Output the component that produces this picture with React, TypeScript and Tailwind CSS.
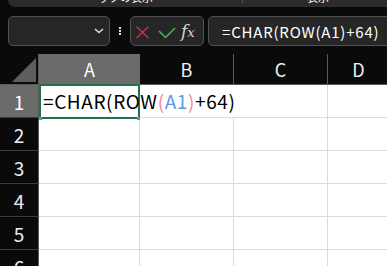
import React from "react";

const font = { fontFamily: '"Noto Sans CJK JP", "Noto Sans", sans-serif' };

function RowHead({ n, sel }: { n: number; sel?: boolean }) {
  return (
    <div
      className={`w-[39px] shrink-0 border-r border-b border-r-[#5a5a5a] border-b-[#3c3c3c] flex items-center justify-center text-[19px] leading-none ${
        sel ? "bg-[#6b6b6b] text-white" : "bg-[#0a0a0a] text-[#e8eef6]"
      }`}
    >
      {n}
    </div>
  );
}

function Row({ n }: { n: number }) {
  return (
    <div className="h-[33px] flex shrink-0">
      <RowHead n={n} />
      <div className="w-[101px] shrink-0 bg-white border-r border-b border-[#dadada]" />
      <div className="w-[94px] shrink-0 bg-white border-r border-b border-[#dadada]" />
      <div className="w-[94px] shrink-0 bg-white border-r border-b border-[#dadada]" />
      <div className="flex-1 bg-white border-b border-[#dadada]" />
    </div>
  );
}

export default function App() {
  return (
    <div className="w-[387px] h-[266px] overflow-hidden bg-[#0a0a0a] flex flex-col" style={font}>
      {/* ribbon remnant */}
      <div className="h-[7px] flex shrink-0">
        <div className="w-[8px]" />
        <div className="flex-1 bg-[#2b2b2b] rounded-bl-[7px] overflow-hidden flex items-start">
          <span className="ml-[90px] w-[144px] mt-[-8px] text-[11px] leading-[11px] text-white whitespace-nowrap">
            ックの表示
          </span>
          <div className="w-px h-[3px] bg-[#5a5a5a]" />
          <span className="ml-[64px] mt-[-8px] text-[11px] leading-[11px] text-white whitespace-nowrap">
            表示
          </span>
        </div>
      </div>

      {/* formula bar */}
      <div className="mt-[9px] h-[30px] flex shrink-0 pl-[8px]">
        <div className="w-[102px] rounded-[5px] border border-[#505050] bg-[#262626] flex items-center justify-end pr-[5px]">
          <svg width="10" height="6" viewBox="0 0 10 6">
            <path d="M1 1 L5 4.5 L9 1" stroke="#e0e0e0" strokeWidth="1.4" fill="none" />
          </svg>
        </div>
        <div className="ml-[8px] w-[3px] flex flex-col items-center justify-center gap-[1px]">
          <div className="w-[2px] h-[2px] bg-[#e0e0e0]" />
          <div className="w-[2px] h-[2px] bg-[#e0e0e0]" />
          <div className="w-[2px] h-[2px] bg-[#e0e0e0]" />
        </div>
        <div className="ml-[9px] w-[74px] rounded-[5px] border border-[#505050] bg-[#262626] flex items-center">
          <svg width="74" height="28" viewBox="0 0 74 28" className="-ml-px">
            <path d="M6.5 9.5 L18.5 21 M18.5 9.5 L6.5 21" stroke="#c8383c" strokeWidth="1.4" fill="none" />
            <path d="M29 14 L35.5 20.5 L45 11" stroke="#4fb453" strokeWidth="1.5" fill="none" />
          </svg>
          <span
            className="-ml-[20px] text-[17px] italic leading-none text-[#d8d8d8]"
            style={{ fontFamily: '"DejaVu Serif", serif' }}
          >
            <span className="-ml-[3px]">f</span>
            <span className="text-[13px]">x</span>
          </span>
        </div>
        <div className="ml-[4px] flex-1 mr-[-10px] rounded-[5px] border border-[#505050] bg-[#262626] flex items-center pl-[13px]">
          <span className="text-[15px] tracking-[0.8px] leading-none text-white whitespace-nowrap">=CHAR(ROW(A1)+64)</span>
        </div>
      </div>

      {/* grid */}
      <div className="mt-[8px] relative flex flex-col flex-1">
        <div className="h-[31px] flex shrink-0 border-b border-[#5c5c5c]">
          <div className="w-[39px] shrink-0 border-r border-[#5a5a5a] relative flex items-end justify-end pr-[2px] pb-[2px]">
            <svg width="24" height="24" viewBox="0 0 24 24">
              <path d="M0 24 L24 0 L24 24 Z" fill="#5e5e5e" />
            </svg>
          </div>
          <div className="w-[101px] shrink-0 bg-[#6b6b6b] flex items-center justify-center text-[18px] text-white leading-none">
            A
          </div>
          <div className="w-[94px] shrink-0 border-r border-[#5a5a5a] flex items-center justify-center text-[18px] text-[#eef2f8] leading-none">
            B
          </div>
          <div className="w-[94px] shrink-0 border-r border-[#5a5a5a] flex items-center justify-center text-[18px] text-[#eef2f8] leading-none">
            C
          </div>
          <div className="flex-1 flex items-center justify-center text-[18px] text-[#eef2f8] leading-none pl-[2px]">
            D
          </div>
        </div>

        {/* row 1 */}
        <div className="h-[33px] flex shrink-0">
          <RowHead n={1} sel />
          <div className="w-[101px] shrink-0 bg-white border-b border-[#dadada] flex items-center pl-[4px] pb-[2px] relative">
            <span className="relative z-10 whitespace-nowrap text-[19px] tracking-[0.6px] leading-none text-black">
              =CHAR(ROW<span className="text-[#ef8a9c]">(</span>
              <span className="text-[#5b9be6]">A1</span>
              <span className="text-[#ef8a9c]">)</span>+64)
            </span>
          </div>
          <div className="w-[94px] shrink-0 bg-white border-b border-[#dadada]" />
          <div className="w-[94px] shrink-0 bg-white border-r border-b border-[#dadada]" />
          <div className="flex-1 bg-white border-b border-[#dadada]" />
        </div>
        <Row n={2} />
        <Row n={3} />
        <Row n={4} />
        <Row n={5} />
        <Row n={6} />

        {/* selection */}
        <div className="absolute left-[39px] top-[30px] w-[101px] h-[35px] border-2 border-[#217346] pointer-events-none" />
        <div className="absolute left-[39px] top-[63px] w-[3px] h-[3px] bg-[#4a90e2]" />
        <div className="absolute left-[137px] top-[63px] w-[3px] h-[3px] bg-[#4a90e2]" />
      </div>
    </div>
  );
}
